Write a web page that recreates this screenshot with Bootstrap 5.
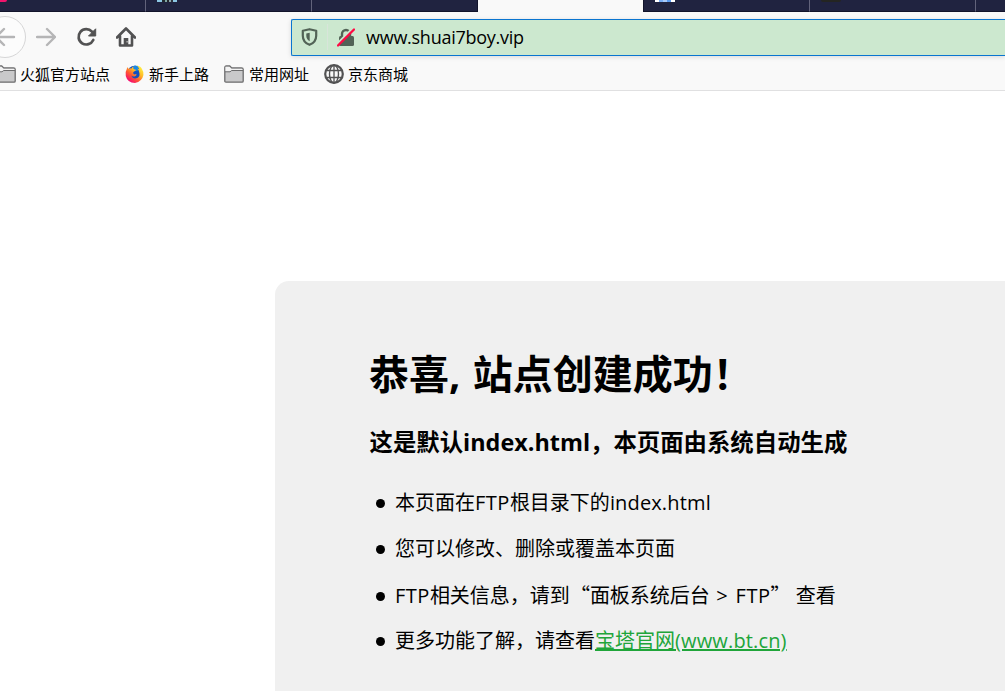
<!DOCTYPE html>
<html lang="zh-CN">
<head>
<meta charset="utf-8">
<title>恭喜，站点创建成功！</title>
<link href="https://cdn.jsdelivr.net/npm/bootstrap@5.3.0/dist/css/bootstrap.min.css" rel="stylesheet">
<style>
body{font-family:"Open Sans","Noto Sans CJK SC",sans-serif;color:#000;height:691px;width:1005px;background:#fff}
svg{display:block;flex:none}
.tabstrip{height:12px;background:#202340}
.tab{width:166px;height:12px;flex:none;border-right:1px solid #62637b;border-bottom:1px solid #12142b;overflow:hidden}
.tab-first{width:146px}
.tab-before{border-right-color:#12142b}
.tab-active{background:#f9f9f9;border-right-color:#12142b;border-bottom-width:0}
.fav{height:2px;width:20px;margin-left:11px}
.fav-pink{width:7px;margin:0;background:#f0146c;border-radius:0 0 5px 0}
.fav-photo{background:linear-gradient(90deg,#8cc7e4 25%,#222b30 25% 40%,#80a9a4 40% 50%,#25282c 50% 62%,#8ca7ad 62% 70%,#30353d 70% 78%,#8cc7e4 78%)}
.fav-blue{background:linear-gradient(90deg,#fff 20%,#79aef5 20% 40%,#a9cafa 40% 60%,#5a9bf0 60% 80%,#fff 80%)}
.fav-dark{background:#242522;border-radius:0 0 2px 2px}
.chrome{height:79px;background:#f9f9f9;border-bottom:1px solid #e0e0e1}
.toolbar{height:50px}
.back{width:42px;height:42px;border:1px solid #d6d6d7;background:#fcfcfc;margin-left:-16px}
.forward{margin-left:10px}
.reload{margin-left:20px}
.home{margin-left:18px}
.urlbar{height:37px;margin-left:155px;padding-left:9px;background:#cce8cf;border:1px solid #0a75d0;border-right:0;border-radius:2px 0 0 2px;box-shadow:0 1px 5px #0002;font-size:18px}
.divide{width:1px;height:26px;margin-left:9px;background:#d8e5da}
.lock{margin-left:9px}
.address{margin-left:11px;letter-spacing:-.26px;line-height:32px;padding-bottom:1px}
.marks{height:24px;font-size:15px;line-height:24px}
.marks svg{margin-right:5px}
.marks .folder-cut{margin:0 4px 0 -4px}
.marks div{margin-right:15px}
.marks .globe{margin-right:4px}
.panel{margin:190px 0 0 275px;height:410px;background:#f0f0f0;border-radius:14px 0 0 0;padding-left:95px}
.panel h1{font-size:40px;line-height:56px;padding-top:65px;margin:0 0 0 -1px}
.panel h3{font-size:23.4px;line-height:32px;margin:24px 0 0 -.5px}
.panel ul{font-size:20px;line-height:30px;margin:30px 0 0;padding-left:25px;list-style:none}
.panel li{height:46px}
.panel li::before{content:"";display:inline-block;width:9px;height:9px;border-radius:50%;background:#000;margin:0 10px 2px -19px}
.panel a{color:#20a53a}
.comma{letter-spacing:1px}
.latin{letter-spacing:.15px}
.ftp{letter-spacing:.5px}
.gt{letter-spacing:1.3px}
.quote{font-family:"Noto Sans CJK SC",sans-serif}
</style>
</head>
<body class="overflow-hidden text-nowrap">
<div class="tabstrip d-flex overflow-hidden">
 <div class="tab tab-first"><div class="fav fav-pink"></div></div>
 <div class="tab"><div class="fav fav-photo"></div></div>
 <div class="tab tab-before"></div>
 <div class="tab tab-active"></div>
 <div class="tab"><div class="fav fav-blue"></div></div>
 <div class="tab"><div class="fav fav-dark"></div></div>
 <div class="tab"></div>
</div>
<header class="chrome">
 <div class="toolbar d-flex align-items-center">
  <div class="back rounded-circle d-flex align-items-center justify-content-center flex-shrink-0"><svg width="22" height="22" viewBox="0 0 22 22" fill="none" stroke="#b5b5b6" stroke-width="2.4" stroke-linecap="round" stroke-linejoin="round"><path d="M20 11H2M10 3l-8 8 8 8"/></svg></div>
  <svg class="forward" width="20" height="20" viewBox="0 0 20 20" fill="none" stroke="#b5b5b6" stroke-width="2.4" stroke-linecap="round" stroke-linejoin="round"><path d="M1 10h17.500M11 2l8 8-8 8"/></svg>
  <svg class="reload" width="22" height="20" viewBox="0 0 22 20"><path d="M17.300 13A7.700 7.700 0 1 1 16 4.600" fill="none" stroke="#525253" stroke-width="2.700" stroke-linecap="round"/><path d="M19.700 1.800v7.200h-7.200z" fill="#525253" stroke="#525253" stroke-linejoin="round"/></svg>
  <svg class="home" width="20" height="22" viewBox="0 0 20 22"><path d="M1 11.500L10 2.500l9 9M4 10v9.500h12V10" fill="none" stroke="#525253" stroke-width="2.600" stroke-linecap="round" stroke-linejoin="round"/><path d="M7.700 20v-8h4.600v8z" fill="#525253"/><path d="M10.600 15h1v1.500h-1z" fill="#ddd"/></svg>
  <div class="urlbar d-flex align-items-center flex-grow-1">
   <svg width="17" height="18" viewBox="0 0 17 18"><path d="M8.500 1.200l6.700 1.500v5c0 4.500-2.800 7.600-6.700 9.100-3.900-1.500-6.700-4.600-6.700-9.100v-5z" fill="none" stroke="#526356" stroke-width="2.200" stroke-linejoin="round"/><path d="M8.700 4.800v8.400c-2.200-1.200-3.400-3-3.400-5.500V5.400z" fill="#526356"/></svg>
   <div class="divide"></div>
   <svg class="lock" width="18" height="19" viewBox="0 0 18 19"><path d="M5 9V6a4 4 0 0 1 8 0v3" fill="none" stroke="#526356" stroke-width="2.400"/><rect x="2" y="8" width="15" height="10" rx="1.500" fill="#526356"/><path d="M-.5 16.500L15.500.5" stroke="#cce8cf" stroke-width="2.200"/><path d="M1 17.500L17 1.500" stroke="#ff0a43" stroke-width="2.300" stroke-linecap="round"/></svg>
   <span class="address">www.shuai7boy.vip</span>
  </div>
 </div>
 <nav class="marks d-flex">
  <div class="d-flex align-items-center"><svg class="folder-cut" width="20" height="18" viewBox="0 0 20 18"><path d="M.8 16V2.500q0-1.500 1.500-1.500h3.400l2 2h9.800q1.700 0 1.700 1.500V16q0 1.200-1.200 1.200H2Q.8 17.200.8 16z" fill="#c9c9ca" stroke="#6c6c6d" stroke-width="1.300"/><path d="M1.500 3.700V1.700h4l2 2h10.900v1.500H7.700L6 6.500H1.500z" fill="#f3f3f3"/><path d="M1 6.800h5l1.700-1.300H19" fill="none" stroke="#6c6c6d"/></svg>火狐官方站点</div>
  <div class="d-flex align-items-center">
   <svg width="19" height="20" viewBox="0 0 20 20"><defs><linearGradient id="fire" x1=".85" y1=".1" x2=".2" y2=".9"><stop stop-color="#fff044"/><stop offset=".35" stop-color="#ffba26"/><stop offset=".65" stop-color="#ff5b30"/><stop offset="1" stop-color="#f50a70"/></linearGradient></defs><circle cx="10.300" cy="9" r="7.800" fill="#174fbd"/><path d="M9 1.500Q12 .3 15 3l-2 4-5-1z" fill="#1687e8"/><path d="M2.500 2.500l1 2q1.500-.8 3.300-.3Q7.300 2.700 9 2q-1 2 .5 3l2 .5q.2 1-2 1.800-1.800 1.400-.5 2.700 1 .8 2.800 0 1 .9-.8 2-2.300 1.400-4.300-.4 1.300 3.700 5 3 4.300-.9 3.500-5.300Q14.800 6 13 4.500q1.300-.1 2 .7Q14.400 2.300 12 .7q5 1 6.100 4.600 1.700 2.400 1.300 5.800Q18.100 18 10.500 19.400 2.500 19 .8 12 .1 7.500 1.700 5.300z" fill="url(#fire)"/></svg>新手上路</div>
  <div class="d-flex align-items-center"><svg width="20" height="18" viewBox="0 0 20 18"><path d="M.8 16V2.500q0-1.500 1.500-1.500h3.400l2 2h9.800q1.700 0 1.700 1.500V16q0 1.200-1.200 1.200H2Q.8 17.200.8 16z" fill="#c9c9ca" stroke="#6c6c6d" stroke-width="1.300"/><path d="M1.500 3.700V1.700h4l2 2h10.900v1.500H7.700L6 6.500H1.500z" fill="#f3f3f3"/><path d="M1 6.800h5l1.700-1.300H19" fill="none" stroke="#6c6c6d"/></svg>常用网址</div>
  <div class="d-flex align-items-center"><svg class="globe" width="20" height="20" viewBox="0 0 20 20" fill="none" stroke="#525253"><circle cx="10" cy="10" r="8.800" stroke-width="2.200"/><ellipse cx="10" cy="10" rx="4.500" ry="8.800" stroke-width="1.400"/><path d="M10 1v18M2.500 6.500h15M2.500 13.500h15" stroke-width="1.300"/></svg>京东商城</div>
 </nav>
</header>
<main class="panel">
 <h1 class="fw-bold">恭喜<span class="comma">, </span>站点创建成功！</h1>
 <h3 class="fw-bold">这是默认index.html，本页面由系统自动生成</h3>
 <ul>
  <li>本页面在<span class="ftp">FTP</span>根目录下的<span class="latin">index.html</span></li>
  <li>您可以修改、删除或覆盖本页面</li>
  <li><span class="ftp">FTP</span>相关信息，请到<span class="quote">“</span>面板系统后台<span class="gt"> &gt; </span><span class="ftp">FTP</span><span class="quote">”</span> 查看</li>
  <li>更多功能了解，请查看<a href="#">宝塔官网<span class="latin">(www.bt.cn)</span></a></li>
 </ul>
</main>
<script src="https://cdn.jsdelivr.net/npm/bootstrap@5.3.0/dist/js/bootstrap.bundle.min.js"></script>
</body>
</html>
